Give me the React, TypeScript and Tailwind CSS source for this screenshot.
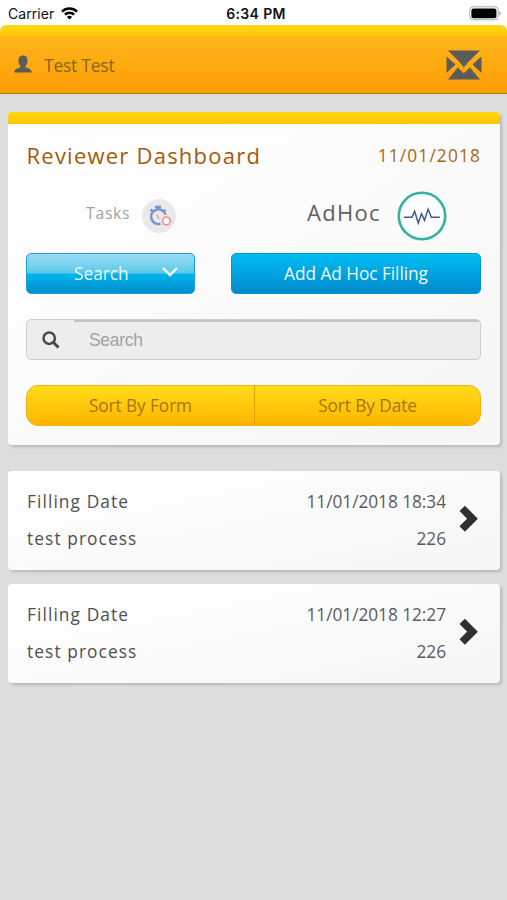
import React from "react";

const entries = [
  { date: "11/01/2018 18:34", name: "test process", count: "226" },
  { date: "11/01/2018 12:27", name: "test process", count: "226" },
];

function StatusBar() {
  return (
    <div className="grid h-[25px] grid-cols-3 items-center bg-white pl-2 pr-[6px] pt-[2px] font-['Inter','Liberation_Sans',sans-serif] text-[13px] text-[#111]">
      <div className="flex items-center gap-[7px]">
        <span className="text-[14px] tracking-[0.050px]">Carrier</span>
        <svg width="17" height="13" viewBox="0 0 17 13" fill="none" stroke="#000" strokeWidth="2.5">
          <path d="M1 4.6a10.6 10.6 0 0 1 15 0" />
          <path d="M3.9 7.7a6.5 6.5 0 0 1 9.2 0" />
          <path d="M8.5 12.6 5.9 10a3.7 3.7 0 0 1 5.2 0z" fill="#000" stroke="none" />
        </svg>
      </div>
      <span className="ml-[3px] whitespace-nowrap text-center text-[14px] font-semibold tracking-[0.350px]">6:34 PM</span>
      <svg className="justify-self-end" width="32" height="15" viewBox="0 0 32 15">
        <rect x="0.8" y="0.8" width="28.4" height="13" rx="3.5" fill="#fff" stroke="#a8a8a8" strokeWidth="1" />
        <rect x="2.4" y="2.4" width="25" height="9.8" rx="2" fill="#000" />
        <path d="M30.4 5.2c1.8.6 1.8 3.6 0 4.2z" fill="#999" />
      </svg>
    </div>
  );
}

function Header() {
  return (
    <div className="bg-white">
      <header className="h-[69px] overflow-hidden rounded-t-[6px] border-b border-[#b87d14]">
        <div className="h-[11px] bg-linear-to-b from-[#ffd911] to-[#ffc708]" />
        <div className="flex h-[57px] items-center bg-linear-to-b from-[#ffb61a] to-[#ff9c05] pl-[14px] pr-[25px]">
          <svg className="mb-[2px]" width="18" height="18" viewBox="0 0 18 18" fill="#5b5b58">
            <path d="M9 0.500c2.800 0 4.600 2 4.600 4.900 0 2.500-1 4.300-2.100 5.300v1.300c.4.900 6.300 1.500 6.300 5.400H.2c0-3.900 5.900-4.500 6.300-5.400v-1.300c-1.100-1-2.100-2.800-2.100-5.300C4.400 2.500 6.200.5 9 .5z" />
          </svg>
          <span className="ml-3 mt-[2px] text-[17.500px] tracking-[-0.250px] text-[#81671f]">Test Test</span>
          <svg className="ml-auto" width="36" height="30" viewBox="0 0 36 30" fill="#5b5b58">
            <path d="M2 0.500H34L21.800 12.500 17.700 17.500 14 12.500z" />
            <path d="M0.500 6.500 9.500 14.500 0.500 23z" />
            <path d="M35.500 6.500 26.500 14.500 35.500 23z" />
            <path d="M2 29.500 11.800 17.500 17.700 23.300 24 17.500 34 29.500z" />
          </svg>
        </div>
      </header>
    </div>
  );
}

function TasksIcon() {
  return (
    <svg width="34" height="34" viewBox="0 0 34 34" fill="none">
      <circle cx="17" cy="17" r="17" fill="#e9e9e9" />
      <path d="M21.800 12.800A7.300 7.300 0 1 0 18.500 24.800" stroke="#7196cf" strokeWidth="2.500" />
      <path d="M21.800 12.800q1.500 1.500 1.700 3" stroke="#7196cf" strokeWidth="2.200" />
      <path d="M13 8h6M16 8v3M8.500 12l2-1.500M21.500 11l2 1.500" stroke="#7196cf" strokeWidth="2.400" />
      <path d="m14 15.500 3.500 4.300m-1-3.300-1.200 2" stroke="#eda0a0" strokeWidth="1.100" />
      <circle cx="24.500" cy="22" r="4.500" stroke="#f09a98" strokeWidth="1.100" strokeDasharray="1.850 1.100" />
      <circle cx="24.500" cy="22" r="3.600" fill="#fff" stroke="#ef8f8d" strokeWidth="1.300" />
    </svg>
  );
}

function AdHocIcon() {
  return (
    <svg width="50" height="50" viewBox="0 0 50 50" fill="none">
      <circle cx="25" cy="25" r="23.200" fill="#fcfdfd" stroke="#32b39c" strokeWidth="2.600" />
      <path d="M7 26.200h8l2.600-6 3.700 11.800 3.200-9.300 3 6.600 3.600-11.200 3.300 8.100h8.400" stroke="#455a8c" strokeWidth="1.500" />
    </svg>
  );
}

function Dashboard() {
  return (
    <section className="mx-2 mr-[7px] mt-[18px] h-[333px] overflow-hidden rounded-[4px] bg-linear-to-br from-white to-[#f6f6f6] shadow-[2px_2px_3px_#b9b9b9]">
      <div className="h-3 bg-linear-to-b from-[#ffd60e] to-[#fec509]" />
      <div className="pl-[18px] pr-[19px]">
        <div className="flex h-[62px] items-center justify-between whitespace-nowrap">
          <h1 className="ml-[0.500px] text-[22px] tracking-[1.230px] text-[#a35a0b]">Reviewer Dashboard</h1>
          <span className="mt-px text-[17.300px] tracking-[1.150px] text-[#a86812]">11/01/2018</span>
        </div>
        <div className="flex h-[59px] items-center pl-[60px] pr-[34px]">
          <span className="mb-[3px] text-[15.800px] tracking-[0.700px] text-[#a3a3a3]">Tasks</span>
          <span className="ml-[12px]"><TasksIcon /></span>
          <span className="mb-[7px] ml-auto text-[22px] tracking-[1.350px] text-[#606060]">AdHoc</span>
          <span className="ml-4"><AdHocIcon /></span>
        </div>
        <div className="mt-[8px] flex justify-between">
          <button className="flex h-[41px] w-[169px] items-center rounded-[5px] border border-[#1a9fd6] bg-[linear-gradient(180deg,#9adcf1_0%,#5bcaea_49%,#00b6ee_51%,#008dcc_100%)] pl-[47px] text-[17.300px] text-[#edf9fd]">
            Search
            <svg className="mb-[3px] ml-auto mr-4" width="16" height="10" viewBox="0 0 16 10" fill="none" stroke="#fff" strokeWidth="2.300">
              <path d="m1 1 7 7 7-7" />
            </svg>
          </button>
          <button className="h-[41px] w-[250px] rounded-[5px] border border-[#0795d2] bg-linear-to-b from-[#00bdf4] to-[#008acb] text-[17.300px] tracking-[-0.050px] text-[#edf9fd]">
            Add Ad Hoc Filling
          </button>
        </div>
        <div className="mt-[25px] flex h-[41px] overflow-hidden rounded-[5px] border border-[#cecece] bg-[#ededed]">
          <div className="flex w-[47px] items-center justify-center pl-px">
            <svg width="18" height="18" viewBox="0 0 18 18" fill="none" stroke="#494949">
              <circle cx="7.200" cy="7.200" r="5.700" strokeWidth="2.500" />
              <path d="m11.500 11.500 5 5" strokeWidth="3" />
            </svg>
          </div>
          <div className="flex flex-1 items-center border-t-2 border-[#c4c4c4] pl-[15px] font-['Liberation_Sans',Arial,sans-serif] text-[17.500px] tracking-[-0.300px] text-[#a1a1a1]">
            Search
          </div>
        </div>
        <div className="mt-[25px] grid h-[41px] grid-cols-[228px_1fr] overflow-hidden rounded-[12px] border border-[#f5ae12] bg-linear-to-b from-[#ffdc18] to-[#ffb500] text-[17.300px] tracking-[-0.100px] text-[#a87408]">
          <button className="border-r border-[#e5a000]">Sort By Form</button>
          <button>Sort By Date</button>
        </div>
      </div>
    </section>
  );
}

function Entry({ date, name, count }: { date: string; name: string; count: string }) {
  return (
    <li className="flex h-[99px] items-center rounded-[4px] bg-linear-to-br from-white to-[#f6f6f6] pb-[2px] pl-[19px] pr-[22px] text-[17.300px] leading-[37px] text-[#505050] shadow-[2px_2px_3px_#b9b9b9]">
      <div className="tracking-[1.100px]">
        <div>Filling Date</div>
        <div>{name}</div>
      </div>
      <div className="ml-auto text-right tracking-[-0.050px] text-[#5b5b5b]">
        <div>{date}</div>
        <div>{count}</div>
      </div>
      <svg className="mb-[2px] ml-[13px]" width="19" height="28" viewBox="0 0 19 28" fill="none" stroke="#303030" strokeWidth="7.600">
        <path d="m3.200 3.400 10.300 10.300L3.200 24" />
      </svg>
    </li>
  );
}

export default function App() {
  return (
    <main className="h-[900px] w-[507px] overflow-hidden bg-[#dddddd] font-['Open_Sans','Noto_Sans',sans-serif]">
      <StatusBar />
      <Header />
      <Dashboard />
      <ul className="ml-2 mr-[7px] mt-[26px] flex flex-col gap-[14px]">
        {entries.map((entry) => (
          <Entry key={entry.date} {...entry} />
        ))}
      </ul>
    </main>
  );
}
